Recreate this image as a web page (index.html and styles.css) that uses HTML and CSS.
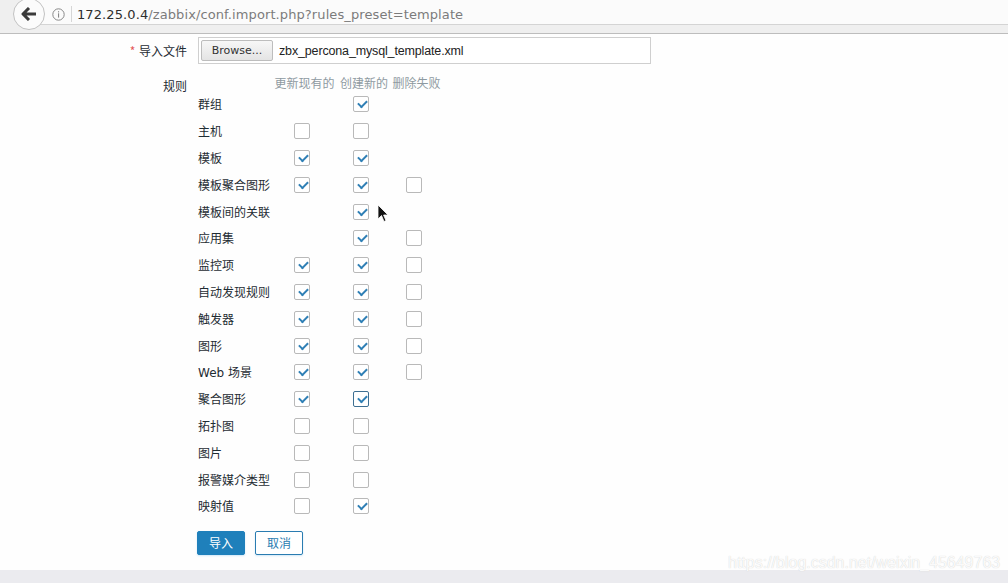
FILE: index.html
```html
<!DOCTYPE html>
<html lang="zh">
<head>
<meta charset="utf-8">
<title>Zabbix import</title>
<link rel="stylesheet" href="styles.css">
</head>
<body>
<div class="page">
  <header class="toolbar">
    <div class="back-btn">
      <svg width="16" height="14" viewBox="0 0 16 14"><path d="M8 1 L2 7 L8 13 M2.5 7 H15" fill="none" stroke="#3a3a3a" stroke-width="3" stroke-linejoin="round"/></svg>
    </div>
    <div class="urlbar">
      <span class="info">
        <svg width="13" height="13" viewBox="0 0 13 13"><circle cx="6.5" cy="6.5" r="5.7" fill="none" stroke="#888" stroke-width="1"/><rect x="6" y="5.3" width="1.1" height="4.3" fill="#888"/><rect x="6" y="3.2" width="1.1" height="1.2" fill="#888"/></svg>
      </span>
      <span class="sep"></span>
      <span class="url"><span class="host">172.25.0.4</span>/zabbix/conf.import.php?rules_preset=template</span>
    </div>
  </header>

  <main class="content">
    <div class="form-row">
      <label class="form-label"><span class="req">*</span> 导入文件</label>
      <div class="file-box">
        <span class="browse">Browse...</span>
        <span class="file-name">zbx_percona_mysql_template.xml</span>
      </div>
    </div>

    <div class="form-row rules-row">
      <label class="form-label rules-label">规则</label>
      <div class="rules">
        <div class="r-head"></div><div class="r-head">更新现有的</div><div class="r-head">创建新的</div><div class="r-head">删除失败</div>

        <div class="r-name">群组</div><div class="cell"></div><div class="cell"><span class="cb on"></span></div><div class="cell"></div>
        <div class="r-name">主机</div><div class="cell"><span class="cb"></span></div><div class="cell"><span class="cb"></span></div><div class="cell"></div>
        <div class="r-name">模板</div><div class="cell"><span class="cb on"></span></div><div class="cell"><span class="cb on"></span></div><div class="cell"></div>
        <div class="r-name">模板聚合图形</div><div class="cell"><span class="cb on"></span></div><div class="cell"><span class="cb on"></span></div><div class="cell"><span class="cb"></span></div>
        <div class="r-name">模板间的关联</div><div class="cell"></div><div class="cell"><span class="cb on"></span></div><div class="cell"></div>
        <div class="r-name">应用集</div><div class="cell"></div><div class="cell"><span class="cb on"></span></div><div class="cell"><span class="cb"></span></div>
        <div class="r-name">监控项</div><div class="cell"><span class="cb on"></span></div><div class="cell"><span class="cb on"></span></div><div class="cell"><span class="cb"></span></div>
        <div class="r-name">自动发现规则</div><div class="cell"><span class="cb on"></span></div><div class="cell"><span class="cb on"></span></div><div class="cell"><span class="cb"></span></div>
        <div class="r-name">触发器</div><div class="cell"><span class="cb on"></span></div><div class="cell"><span class="cb on"></span></div><div class="cell"><span class="cb"></span></div>
        <div class="r-name">图形</div><div class="cell"><span class="cb on"></span></div><div class="cell"><span class="cb on"></span></div><div class="cell"><span class="cb"></span></div>
        <div class="r-name">Web 场景</div><div class="cell"><span class="cb on"></span></div><div class="cell"><span class="cb on"></span></div><div class="cell"><span class="cb"></span></div>
        <div class="r-name">聚合图形</div><div class="cell"><span class="cb on"></span></div><div class="cell"><span class="cb on focus"></span></div><div class="cell"></div>
        <div class="r-name">拓扑图</div><div class="cell"><span class="cb"></span></div><div class="cell"><span class="cb"></span></div><div class="cell"></div>
        <div class="r-name">图片</div><div class="cell"><span class="cb"></span></div><div class="cell"><span class="cb"></span></div><div class="cell"></div>
        <div class="r-name">报警媒介类型</div><div class="cell"><span class="cb"></span></div><div class="cell"><span class="cb"></span></div><div class="cell"></div>
        <div class="r-name">映射值</div><div class="cell"><span class="cb"></span></div><div class="cell"><span class="cb on"></span></div><div class="cell"></div>
      </div>
    </div>

    <div class="form-row buttons-row">
      <div class="form-label"></div>
      <div class="buttons">
        <button class="btn primary">导入</button>
        <button class="btn secondary">取消</button>
      </div>
    </div>
  </main>

  <footer class="bottom-band"></footer>

  <div class="watermark">https://blog.csdn.net/weixin_45649763</div>
  <svg class="cursor" width="12" height="19" viewBox="0 0 12 19"><path d="M1 1 L1 15 L4.5 11.5 L7 17.5 L9 16.6 L6.6 11 L11 11 Z" fill="#111" stroke="#fff" stroke-width="0.8" stroke-linejoin="round"/></svg>
</div>
</body>
</html>
```

FILE: styles.css
```css
* { box-sizing: border-box; }

html, body {
  margin: 0;
  padding: 0;
  background: #fefefe;
}

body {
  font-family: "DejaVu Sans", "Noto Sans CJK SC", sans-serif;
  font-size: 12px;
  color: #1f2c33;
}

.page {
  position: relative;
  width: 1008px;
  height: 583px;
  display: flex;
  flex-direction: column;
  overflow: hidden;
}

/* browser toolbar */
.toolbar {
  position: relative;
  height: 34px;
  flex: none;
  background: #efefef;
  border-bottom: 1px solid #bdbdbd;
}

.urlbar {
  position: absolute;
  left: 30px;
  right: -4px;
  top: -3px;
  height: 28px;
  background: #fbfbfb;
  border: 1px solid #d4d4d4;
  border-radius: 3px;
  display: flex;
  align-items: center;
  padding-left: 21px;
  padding-top: 6px;
}

.back-btn {
  position: absolute;
  z-index: 2;
  left: 13px;
  top: -2px;
  width: 32px;
  height: 32px;
  border-radius: 50%;
  background: #fbfbfb;
  border: 1px solid #c2c2c2;
  display: flex;
  align-items: center;
  justify-content: center;
}

.info {
  display: flex;
  width: 13px;
  height: 13px;
}

.sep {
  width: 1px;
  height: 16px;
  background: #d6d6d6;
  margin: 0 5px 0 6px;
}

.url {
  font-family: "DejaVu Sans", sans-serif;
  font-size: 13px;
  color: #7b7b7b;
  letter-spacing: 0.1px;
}

.url .host {
  color: #2e2e2e;
}

/* content */
.content {
  flex: 1;
  padding-top: 3px;
}

.form-row {
  display: grid;
  grid-template-columns: 187px auto;
  column-gap: 11px;
  align-items: start;
}

.form-label {
  text-align: right;
  font-family: "Noto Sans CJK SC", sans-serif;
  font-size: 12px;
  color: #1f2c33;
  line-height: 27px;
}

.req {
  color: #e45959;
  margin-right: 1px;
}

.file-box {
  width: 453px;
  height: 27px;
  border: 1px solid #cfcfcf;
  background: #fff;
  display: flex;
  align-items: center;
  padding-left: 2px;
}

.browse {
  height: 21px;
  width: 72px;
  border: 1px solid #bdbdbd;
  border-radius: 2px;
  background: linear-gradient(#f7f7f7, #e4e4e4);
  font-family: "DejaVu Sans", sans-serif;
  font-size: 11px;
  color: #333;
  display: flex;
  align-items: center;
  justify-content: center;
}

.file-name {
  margin-left: 6px;
  font-family: "Liberation Sans", sans-serif;
  font-size: 12.5px;
  letter-spacing: -0.15px;
  color: #222;
}

.rules-row {
  margin-top: 9px;
}

.rules-label {
  line-height: 18px;
  padding-top: 4px;
}

.rules {
  display: grid;
  grid-template-columns: 74px 65px 54px 51px;
  grid-template-rows: 18px;
  grid-auto-rows: 26.8px;
  font-family: "Noto Sans CJK SC", sans-serif;
}

.r-head {
  color: #8e9aa1;
  font-size: 12px;
  line-height: 19px;
  text-align: center;
  white-space: nowrap;
}

.r-name {
  display: flex;
  align-items: center;
  font-size: 12px;
  color: #1f2c33;
  white-space: nowrap;
  padding-bottom: 1px;
  font-family: "DejaVu Sans", "Noto Sans CJK SC", sans-serif;
}

.cell {
  display: flex;
  align-items: center;
  justify-content: center;
  padding-right: 6px;
}

.cb {
  width: 16px;
  height: 16px;
  border: 1px solid #b9b9b9;
  border-radius: 2px;
  background: #fff;
  position: relative;
}

.cb.on::after {
  content: "";
  position: absolute;
  left: 4px;
  top: 3px;
  width: 7px;
  height: 4px;
  border-left: 2px solid #2f7fb5;
  border-bottom: 2px solid #2f7fb5;
  transform: rotate(-45deg);
}

.cb.focus {
  border-color: #3d6f92;
}

.buttons-row {
  margin-top: 11px;
}

.buttons {
  display: flex;
  gap: 10px;
  margin-left: -1px;
}

.btn {
  height: 24px;
  width: 48px;
  font-family: "Noto Sans CJK SC", sans-serif;
  font-size: 12px;
  border-radius: 2px;
  padding: 0;
  box-shadow: 0 1px 2px rgba(120, 190, 235, 0.35);
}

.btn.primary {
  background: #1f80bb;
  border: 1px solid #1f80bb;
  color: #fff;
}

.btn.secondary {
  background: #fff;
  border: 1px solid #2a7cb1;
  color: #2a7cb1;
}

.bottom-band {
  height: 13px;
  flex: none;
  background: #ebebef;
}

.watermark {
  position: absolute;
  left: 728px;
  top: 554px;
  font-family: "Liberation Sans", sans-serif;
  font-size: 16px;
  color: rgba(255, 255, 255, 0.92);
  text-shadow: 0 0 1px #c8c8c8;
  letter-spacing: 0;
}

.cursor {
  position: absolute;
  left: 377px;
  top: 204px;
}
```
